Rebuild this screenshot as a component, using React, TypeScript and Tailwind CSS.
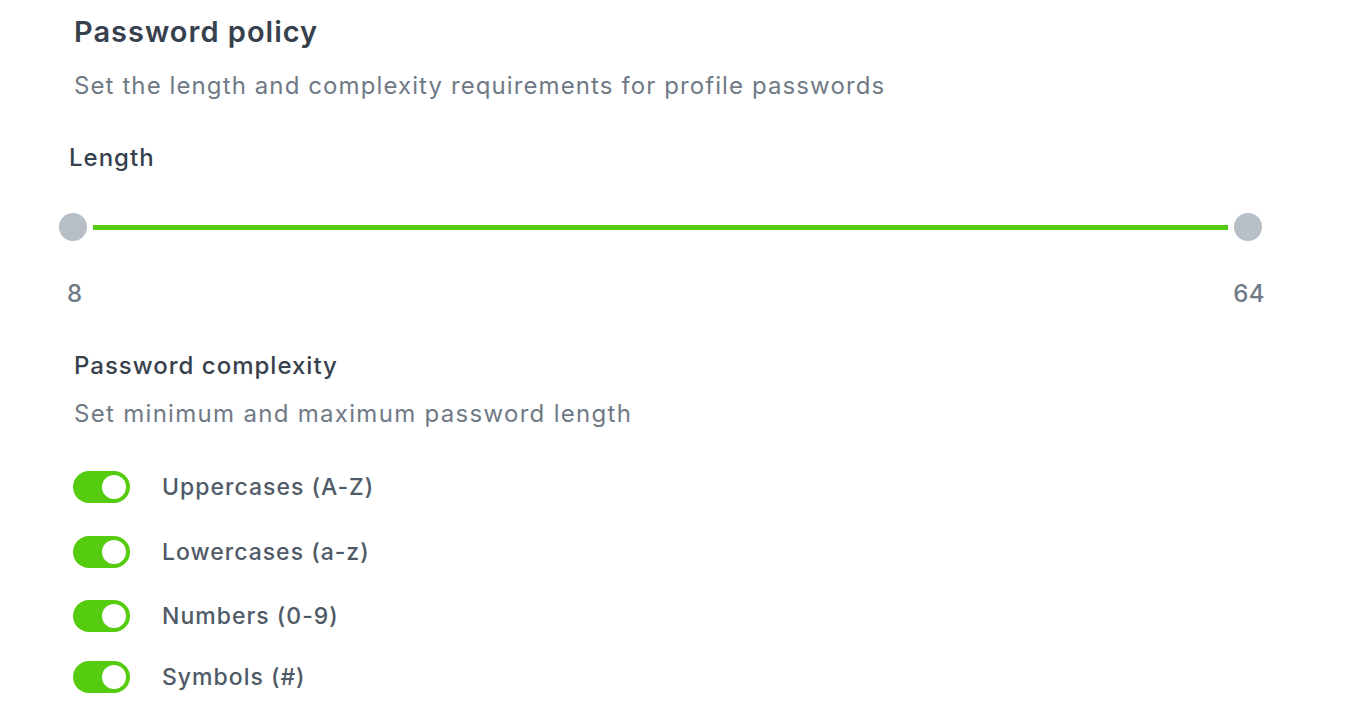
import React from "react";

const items = [
  { t: "Uppercases (A-Z)", mt: "mt-0" },
  { t: "Lowercases (a-z)", mt: "mt-[33px]" },
  { t: "Numbers (0-9)", mt: "mt-[32px]" },
  { t: "Symbols (#)", mt: "mt-[29px]" },
];

function Toggle() {
  return (
    <div className="flex h-[32px] w-[57px] shrink-0 items-center justify-end rounded-full bg-[#55cc0f] px-[4px]">
      <div className="h-[24px] w-[24px] rounded-full bg-white" />
    </div>
  );
}

export default function App() {
  return (
    <div
      className="min-h-screen bg-white pl-[74px] pr-[100px] pt-[12px]"
      style={{ fontFamily: "Inter, 'Noto Sans', sans-serif" }}
    >
      <h1 className="text-[29px] font-semibold leading-[40px] tracking-[1px] text-[#36414d]">Password policy</h1>
      <p className="mt-[19px] text-[24px] leading-[30px] tracking-[1.1px] text-[#6f7a86]">
        Set the length and complexity requirements for profile passwords
      </p>
      <div className="-ml-[5px] mt-[42px] text-[24px] font-medium leading-[30px] tracking-[1px] text-[#36414d]">
        Length
      </div>
      <div className="-ml-[15px] mt-[39px] flex h-[30px] items-center">
        <div className="h-[28px] w-[28px] shrink-0 rounded-full bg-[#b7bec6]" />
        <div className="mx-[6px] h-[5px] flex-1 bg-[#55cc0f]" />
        <div className="h-[28px] w-[28px] shrink-0 rounded-full bg-[#b7bec6]" />
      </div>
      <div className="-ml-[7px] mt-[37px] flex justify-between text-[24px] font-medium leading-[30px] tracking-[0.5px] text-[#6f7a86]">
        <span>8</span>
        <span className="mr-[-3px]">64</span>
      </div>
      <div className="mt-[42px] text-[24px] font-medium leading-[30px] tracking-[1px] text-[#36414d]">
        Password complexity
      </div>
      <p className="mt-[18px] text-[24px] leading-[30px] tracking-[1.3px] text-[#6f7a86]">
        Set minimum and maximum password length
      </p>
      <div className="mt-[42px] flex flex-col">
        {items.map((it) => (
          <div key={it.t} className={`-ml-[1px] flex items-center gap-[32px] ${it.mt}`}>
            <Toggle />
            <span className="text-[23px] font-medium leading-[30px] tracking-[1px] text-[#4f5a67]">{it.t}</span>
          </div>
        ))}
      </div>
    </div>
  );
}
